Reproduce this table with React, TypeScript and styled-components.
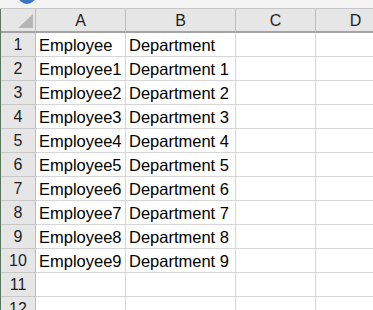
import React from "react";
import styled, { createGlobalStyle } from "styled-components";

const Global = createGlobalStyle`
  html, body { margin: 0; padding: 0; background: #ffffff; overflow: hidden; }
  body { font-family: "Liberation Sans", Arial, sans-serif; }
`;

const Page = styled.div`
  width: 373px;
  height: 310px;
  overflow: hidden;
  display: flex;
  flex-direction: column;
  background: #ffffff;
`;

const TopBar = styled.div`
  height: 8px;
  flex: none;
  background: #f3f3f3;
  border-bottom: 1px solid #c6c6c6;
  display: flex;
  padding-left: 18px;
  overflow: hidden;
`;

const Badge = styled.div`
  width: 18px;
  height: 18px;
  border-radius: 50%;
  background: #3c76c0;
  margin-top: -14px;
  flex: none;
`;

const Sheet = styled.div`
  display: grid;
  grid-template-columns: 35px 90px 110px 80px 80px;
  grid-auto-rows: 24px;
  border-left: 1px solid #5b7563;
  flex: 1;
  align-content: start;
`;

const Corner = styled.div`
  box-sizing: border-box;
  background: #e6e6e6;
  border-right: 1px solid #bdbdbd;
  border-bottom: 2px solid #a3a3a3;
  display: flex;
  align-items: flex-end;
  justify-content: flex-end;
  padding: 0 2px 3px 0;
`;

const Triangle = styled.div`
  width: 15px;
  height: 14px;
  background: #b6b6b6;
  clip-path: polygon(100% 0, 100% 100%, 0 100%);
`;

const ColHead = styled.div`
  box-sizing: border-box;
  background: #e6e6e6;
  border-right: 1px solid #bdbdbd;
  border-bottom: 2px solid #a3a3a3;
  display: flex;
  align-items: center;
  justify-content: center;
  font-size: 16px;
  color: #1e1e1e;
  padding-top: 1px;
`;

const RowHead = styled.div`
  box-sizing: border-box;
  background: #e6e6e6;
  border-right: 1px solid #bdbdbd;
  border-bottom: 1px solid #c8c8c8;
  display: flex;
  align-items: center;
  justify-content: center;
  font-size: 16px;
  color: #1e1e1e;
  padding-top: 1px;
`;

const Cell = styled.div`
  box-sizing: border-box;
  border-right: 1px solid #d6d6d6;
  border-bottom: 1px solid #d6d6d6;
  display: flex;
  align-items: center;
  padding: 1px 0 0 3px;
  font-size: 16.5px;
  color: #000000;
  white-space: nowrap;
  overflow: hidden;
`;

const cols = ["A", "B", "C", "D"];

const rows: string[][] = [
  ["Employee", "Department"],
  ...Array.from({ length: 9 }, (_, i) => [`Employee${i + 1}`, `Department ${i + 1}`]),
  [],
  [],
];

export default function App() {
  return (
    <>
      <Global />
      <Page>
        <TopBar>
          <Badge />
        </TopBar>
        <Sheet>
          <Corner>
            <Triangle />
          </Corner>
          {cols.map((c) => (
            <ColHead key={c}>{c}</ColHead>
          ))}
          {rows.map((r, i) => (
            <React.Fragment key={i}>
              <RowHead>{i + 1}</RowHead>
              {cols.map((c, j) => (
                <Cell key={c}>{r[j] ?? ""}</Cell>
              ))}
            </React.Fragment>
          ))}
        </Sheet>
      </Page>
    </>
  );
}
